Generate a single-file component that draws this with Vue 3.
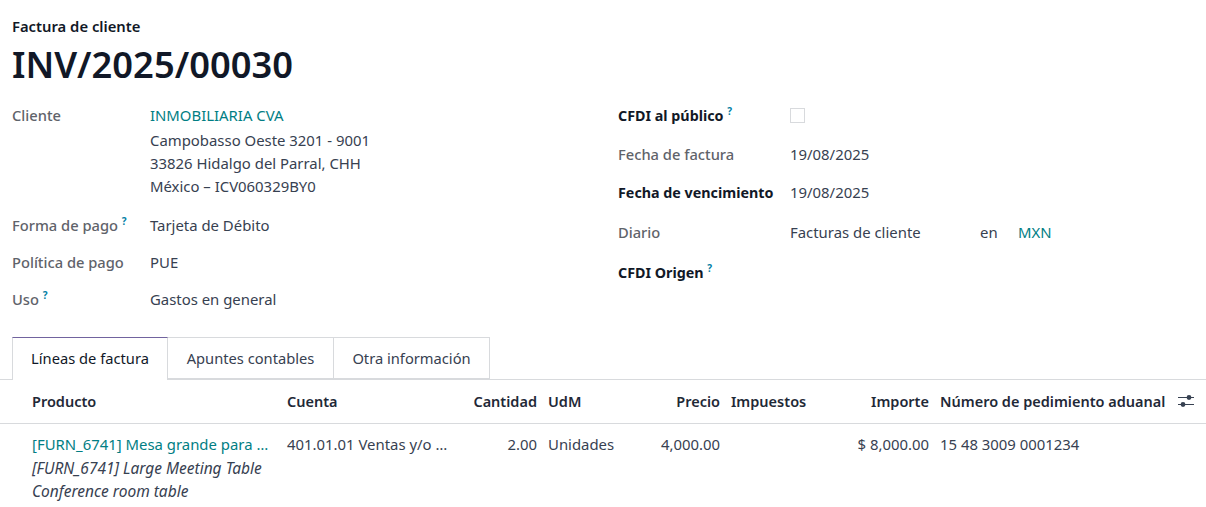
<template>
  <div class="sheet">
    <div class="kind">Factura de cliente</div>
    <h1 class="number">INV/2025/00030</h1>

    <div class="groups">
      <div class="group left">
        <div class="row client">
          <div class="label">Cliente</div>
          <div class="value">
            <div class="link name">INMOBILIARIA CVA</div>
            <div class="addr">Campobasso Oeste 3201 - 9001</div>
            <div class="addr">33826 Hidalgo del Parral, CHH</div>
            <div class="addr">México – ICV060329BY0</div>
          </div>
        </div>
        <div class="row pay">
          <div class="label">Forma de pago <sup>?</sup></div>
          <div class="value">Tarjeta de Débito</div>
        </div>
        <div class="row policy">
          <div class="label">Política de pago</div>
          <div class="value">PUE</div>
        </div>
        <div class="row use">
          <div class="label">Uso <sup>?</sup></div>
          <div class="value">Gastos en general</div>
        </div>
      </div>

      <div class="group right">
        <div class="row r1">
          <div class="label strong">CFDI al público <sup>?</sup></div>
          <div class="value"><span class="check"></span></div>
        </div>
        <div class="row r2">
          <div class="label">Fecha de factura</div>
          <div class="value">19/08/2025</div>
        </div>
        <div class="row r3">
          <div class="label strong">Fecha de vencimiento</div>
          <div class="value">19/08/2025</div>
        </div>
        <div class="row r4">
          <div class="label">Diario</div>
          <div class="value journal">
            <span class="journal-name">Facturas de cliente</span>
            <span class="journal-in">en</span>
            <span class="link">MXN</span>
          </div>
        </div>
        <div class="row r5">
          <div class="label strong">CFDI Origen <sup>?</sup></div>
        </div>
      </div>
    </div>

    <div class="tabs">
      <div v-for="(tab, i) in tabs" :key="tab.name" class="tab" :class="{ active: i === 0 }" :style="{ width: tab.width + 'px' }">{{ tab.name }}</div>
    </div>

    <div class="grid head">
      <div>Producto</div>
      <div>Cuenta</div>
      <div class="num">Cantidad</div>
      <div>UdM</div>
      <div class="num">Precio</div>
      <div>Impuestos</div>
      <div class="num">Importe</div>
      <div>Número de pedimiento aduanal</div>
      <svg class="sliders" width="16" height="14" viewBox="0 0 16 14">
        <path d="M0 3.5h16M0 10.5h16" stroke="#374151" stroke-width="1.2" />
        <circle cx="11" cy="3.5" r="2.4" fill="#374151" />
        <circle cx="5" cy="10.5" r="2.4" fill="#374151" />
      </svg>
    </div>

    <div class="grid line">
      <div class="product">
        <div class="link first">[FURN_6741] Mesa grande para …</div>
        <div class="desc">[FURN_6741] Large Meeting Table</div>
        <div class="desc">Conference room table</div>
      </div>
      <div>401.01.01 Ventas y/o …</div>
      <div class="num">2.00</div>
      <div>Unidades</div>
      <div class="num">4,000.00</div>
      <div></div>
      <div class="num">$ 8,000.00</div>
      <div>15 48 3009 0001234</div>
    </div>
  </div>
</template>

<script setup>
const tabs = [
  { name: 'Líneas de factura', width: 156 },
  { name: 'Apuntes contables', width: 166 },
  { name: 'Otra información', width: 156 },
]
</script>

<style scoped>
.sheet {
  width: 1206px;
  height: 507px;
  overflow: hidden;
  background: #fff;
  color: #374151;
  font-family: "Noto Sans", sans-serif;
  font-size: 14.9px;
  line-height: 23px;
}

.kind {
  padding: 15px 12px 0;
  font-size: 14.8px;
  font-weight: 600;
  color: #111827;
}

.number {
  margin: 0;
  padding: 0 12px;
  height: 54px;
  font-size: 36.3px;
  line-height: 52px;
  font-weight: 600;
  color: #111827;
}

.groups {
  display: flex;
  height: 245px;
  padding-top: 12px;
  box-sizing: border-box;
}

.group { padding-left: 12px; }
.left { width: 594px; }

.row { display: flex; }
.label { font-size: 14.7px; font-weight: 500; color: #5f636a; }
.left .label { width: 138px; }
.right .label { width: 172px; }
.label.strong { font-size: 14.3px; font-weight: 700; color: #111827; }

sup {
  font-size: 10px;
  line-height: 0;
  font-weight: 700;
  color: #0180a5;
}

.link { color: #017e84; }
.name { margin-bottom: 2px; }

.client { height: 110px; }
.pay { height: 37px; }
.policy { height: 37px; }

.r1 { height: 39px; }
.r2 { height: 38px; }
.r3 { height: 40px; }
.r4 { height: 40px; }

.check {
  display: block;
  width: 13px;
  height: 13px;
  margin-top: 4px;
  border: 1px solid #d8dadd;
}

.journal { display: flex; }
.journal-name { width: 190px; }
.journal-in { width: 38px; }

.tabs {
  display: flex;
  padding-left: 12px;
  height: 43px;
  box-sizing: border-box;
  border-bottom: 1px solid #d8dadd;
}

.tab {
  box-sizing: border-box;
  height: 42px;
  padding-top: 9px;
  font-size: 14.7px;
  text-align: center;
  border: 1px solid #d8dadd;
  border-left: 0;
}

.tab.active {
  height: 43px;
  background: #fff;
  color: #111827;
  border-top-color: #71639e;
  border-left: 1px solid #d8dadd;
  border-bottom: 0;
}

.grid {
  display: grid;
  grid-template-columns: 244px 166px 73px 90px 71px 85px 102px 1fr;
  column-gap: 11px;
  padding-left: 32px;
}

.head {
  position: relative;
  height: 44px;
  box-sizing: border-box;
  align-items: center;
  border-bottom: 1px solid #d8dadd;
  font-size: 14.5px;
  font-weight: 600;
  color: #1f2937;
}

.num { text-align: right; }

.line { padding-top: 9px; white-space: nowrap; }

.first { margin-bottom: 1px; }
.desc { font-size: 15.5px; font-style: italic; }

.sliders {
  position: absolute;
  left: 1178px;
  top: 14px;
}
</style>
